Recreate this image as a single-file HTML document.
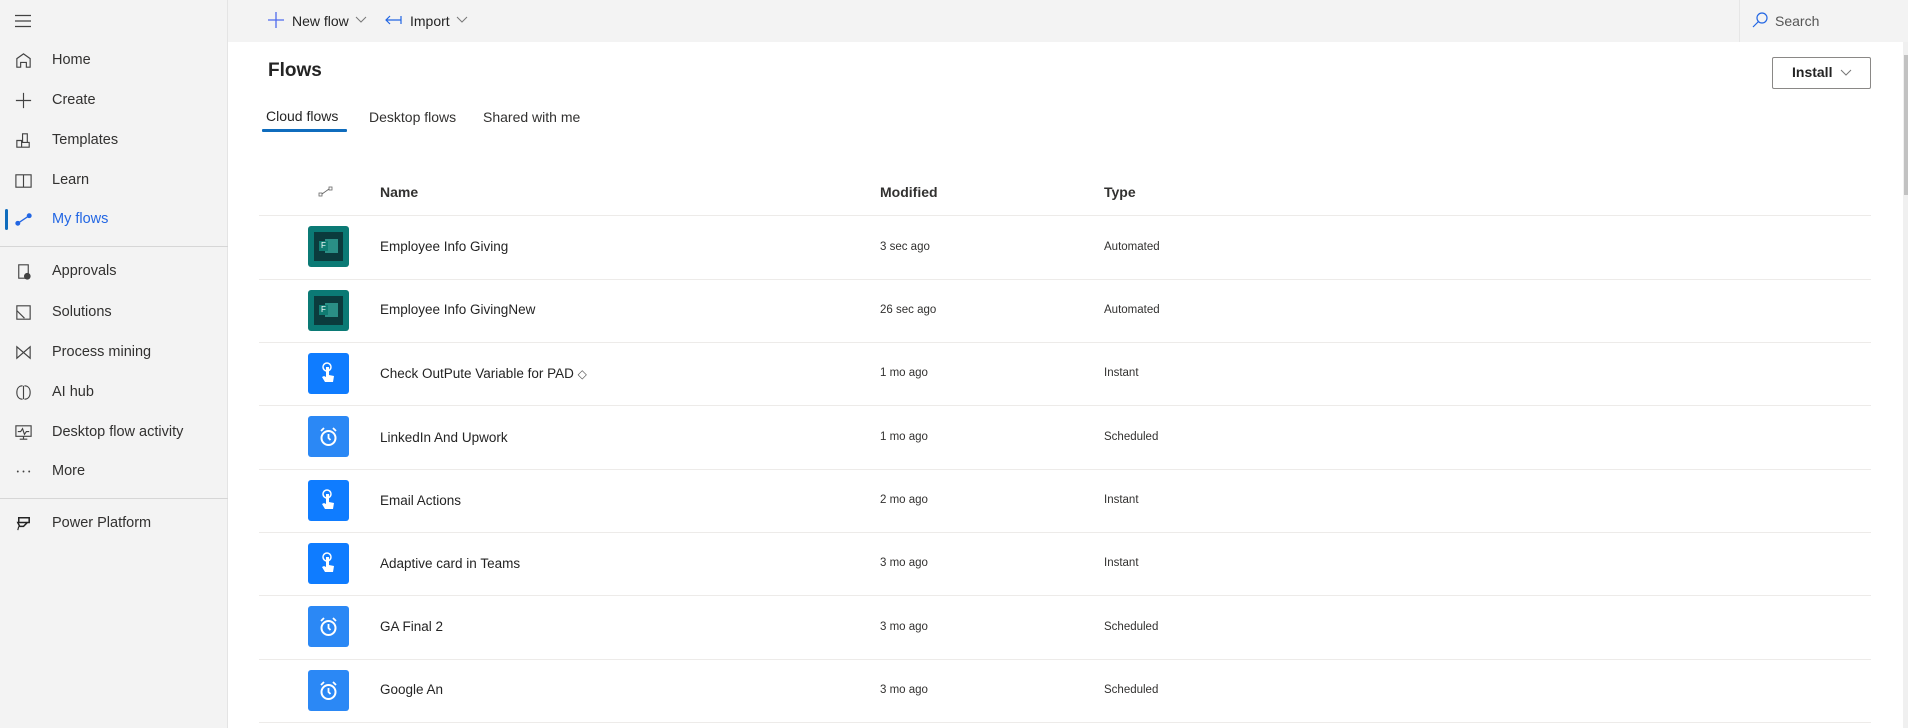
<!DOCTYPE html>
<html><head><meta charset="utf-8"><style>
*{margin:0;padding:0;box-sizing:border-box}
body{width:1908px;height:728px;overflow:hidden;background:#f3f3f3;font-family:"Liberation Sans",sans-serif;color:#242424;position:relative}
.side{position:absolute;left:0;top:0;width:228px;height:728px;background:#f3f3f3;border-right:1px solid #e4e4e4}
.ni{position:absolute;left:0;width:228px;height:36px;display:flex;align-items:center;font-size:14.5px;color:#323130}
.ni svg{position:absolute;left:14px;width:19px;height:19px}
.ni span{position:absolute;left:52px}
.sep{position:absolute;left:0;width:228px;height:1px;background:#d6d6d6}
.top{position:absolute;left:228px;top:0;width:1680px;height:42px;background:#f3f3f3}
.main{position:absolute;left:228px;top:42px;width:1675px;height:686px;background:#fff}
.t{position:absolute;white-space:nowrap}
.row{position:absolute;left:259px;width:1612px;height:1px;background:#edebe9}
.ic{position:absolute;left:308px;width:41px;height:41px;border-radius:3px}
.teal{background:#0b7a75}
.blue{background:#0f7cff}
.nm{position:absolute;left:380px;font-size:13.5px;color:#242424}
.md{position:absolute;left:880px;font-size:11.5px;color:#323130}
.ty{position:absolute;left:1104px;font-size:11.5px;color:#323130}
</style></head><body>
<div class="side">
<svg style="position:absolute;left:14px;top:14px" width="18" height="14"><path d="M1 1.5h16M1 7h16M1 12.5h16" stroke="#424242" stroke-width="1.2"/></svg>
<div class="ni" style="top:42px"><svg viewBox="0 0 20 20"><path d="M3 17V8l7-5 7 5v9h-4v-5H7v5z" fill="none" stroke="#424242" stroke-width="1.2"/></svg><span>Home</span></div>
<div class="ni" style="top:82px"><svg viewBox="0 0 20 20"><path d="M10 2v16M2 10h16" stroke="#424242" stroke-width="1.2"/></svg><span>Create</span></div>
<div class="ni" style="top:122px"><svg viewBox="0 0 20 20"><path d="M3 10h5v7H3zM8 12h8v5H8zM9 3h5v9H9z" fill="none" stroke="#424242" stroke-width="1.2"/></svg><span>Templates</span></div>
<div class="ni" style="top:162px"><svg viewBox="0 0 20 20"><path d="M2 4h16v13H2zM10 4v13" fill="none" stroke="#424242" stroke-width="1.2"/></svg><span>Learn</span></div>
<div style="position:absolute;left:5px;top:209px;width:3px;height:21px;background:#0f6cbd;border-radius:2px"></div>
<div class="ni" style="top:201px"><svg viewBox="0 0 20 20"><circle cx="4" cy="14" r="2.6" fill="#2266e3"/><circle cx="16" cy="6" r="2.6" fill="#2266e3"/><path d="M4 14L16 6" stroke="#2266e3" stroke-width="1.3"/></svg><span style="color:#2266e3">My flows</span></div>
<div class="sep" style="top:246px"></div>
<div class="ni" style="top:253px"><svg viewBox="0 0 20 20"><path d="M5 3h10v14H5z" fill="none" stroke="#424242" stroke-width="1.2"/><circle cx="14" cy="15" r="3.5" fill="#424242"/></svg><span>Approvals</span></div>
<div class="ni" style="top:294px"><svg viewBox="0 0 20 20"><path d="M3 3h14v14H3zM3 8l8 8" fill="none" stroke="#424242" stroke-width="1.2"/></svg><span>Solutions</span></div>
<div class="ni" style="top:334px"><svg viewBox="0 0 20 20"><path d="M3 4v12l14-12v12z" fill="none" stroke="#424242" stroke-width="1.2"/></svg><span>Process mining</span></div>
<div class="ni" style="top:374px"><svg viewBox="0 0 20 20"><path d="M9 3C5 3 3 6 3 10s2 7 6 7M11 3c4 0 6 3 6 7s-2 7-6 7M10 3v14" fill="none" stroke="#424242" stroke-width="1.2"/></svg><span>AI hub</span></div>
<div class="ni" style="top:414px"><svg viewBox="0 0 20 20"><path d="M2 3h16v11H2zM10 14v3M6 17h8M4 9h3l2-3 2 6 2-3h3" fill="none" stroke="#424242" stroke-width="1.2"/></svg><span>Desktop flow activity</span></div>
<div class="ni" style="top:453px"><svg viewBox="0 0 20 20"><circle cx="4" cy="10" r="1" fill="#424242"/><circle cx="10" cy="10" r="1" fill="#424242"/><circle cx="16" cy="10" r="1" fill="#424242"/></svg><span>More</span></div>
<div class="sep" style="top:498px"></div>
<div class="ni" style="top:505px"><svg viewBox="0 0 20 20"><path d="M5 4h11v5H5zM4 9h10l-4 4H6z" fill="none" stroke="#242424" stroke-width="1.6"/><path d="M5 13l-1 4" stroke="#242424" stroke-width="1.2"/></svg><span>Power Platform</span></div>
</div>
<div class="top">
<svg style="position:absolute;left:39px;top:11px" width="18" height="18"><path d="M9 1v16M1 9h16" stroke="#4f6bed" stroke-width="1.3"/></svg>
<div class="t" style="left:64px;top:13px;font-size:14px">New flow</div>
<svg style="position:absolute;left:127px;top:16px" width="12" height="8"><path d="M1 1l5 5 5-5" fill="none" stroke="#777" stroke-width="1"/></svg>
<svg style="position:absolute;left:157px;top:14px" width="18" height="12"><path d="M1 6h15M5 2L1 6l4 4M16 2v8" fill="none" stroke="#2266e3" stroke-width="1.2"/></svg>
<div class="t" style="left:182px;top:13px;font-size:14px">Import</div>
<svg style="position:absolute;left:228px;top:16px" width="12" height="8"><path d="M1 1l5 5 5-5" fill="none" stroke="#777" stroke-width="1"/></svg>
<div style="position:absolute;left:1511px;top:0;width:1px;height:42px;background:#e6e6e6"></div>
<svg style="position:absolute;left:1523px;top:11px" width="18" height="18"><circle cx="11" cy="7" r="5" fill="none" stroke="#2266e3" stroke-width="1.2"/><path d="M7.5 10.5L2 16" stroke="#2266e3" stroke-width="1.2"/></svg>
<div class="t" style="left:1547px;top:13px;font-size:14px;color:#555">Search</div>
</div>
<div class="main"></div>
<div style="position:absolute;left:1903px;top:42px;width:5px;height:686px;background:#f0f0f0"></div>
<div style="position:absolute;left:1904px;top:55px;width:4px;height:140px;background:#c2c2c2"></div>
<div class="t" style="left:268px;top:60px;font-size:19px;font-weight:bold;color:#242424">Flows</div>
<div style="position:absolute;left:1772px;top:57px;width:99px;height:32px;border:1px solid #8a8886;border-radius:2px"></div>
<div class="t" style="left:1792px;top:64px;font-size:14px;font-weight:bold">Install</div>
<svg style="position:absolute;left:1840px;top:69px" width="12" height="8"><path d="M1 1l5 5 5-5" fill="none" stroke="#777" stroke-width="1"/></svg>
<div class="t" style="left:266px;top:108px;font-size:14px;color:#242424">Cloud flows</div>
<div style="position:absolute;left:262px;top:129px;width:85px;height:3px;background:#0f6cbd;border-radius:1px"></div>
<div class="t" style="left:369px;top:109px;font-size:14px;color:#323130">Desktop flows</div>
<div class="t" style="left:483px;top:109px;font-size:14px;color:#323130">Shared with me</div>
<svg style="position:absolute;left:318px;top:186px" width="15" height="12"><rect x="1" y="7" width="3" height="3" fill="none" stroke="#666" stroke-width=".8"/><rect x="11" y="1" width="3" height="3" fill="none" stroke="#666" stroke-width=".8"/><path d="M4 8l7-5" stroke="#666" stroke-width=".8"/></svg>
<div class="t" style="left:380px;top:184px;font-size:14px;font-weight:bold;color:#323130">Name</div>
<div class="t" style="left:880px;top:184px;font-size:14px;font-weight:bold;color:#323130">Modified</div>
<div class="t" style="left:1104px;top:184px;font-size:14px;font-weight:bold;color:#323130">Type</div>
<div class="row" style="top:215px"></div>
<div class="row" style="top:279px"></div>
<div class="row" style="top:342px"></div>
<div class="row" style="top:405px"></div>
<div class="row" style="top:469px"></div>
<div class="row" style="top:532px"></div>
<div class="row" style="top:595px"></div>
<div class="row" style="top:659px"></div>
<div class="row" style="top:722px"></div>

<!-- rows -->
<div class="ic teal" style="top:226px"><div style="position:absolute;left:6px;top:6px;width:29px;height:29px;background:#0b3b3d"></div><div style="position:absolute;left:17px;top:13px;width:13px;height:14px;background:#2a8f86"></div><div style="position:absolute;left:11px;top:15px;width:9px;height:10px;background:#107c72;color:#fff;font-size:8px;text-align:center;line-height:10px">F</div></div>
<div class="nm" style="top:239px">Employee Info Giving</div><div class="md" style="top:241px">3 sec ago</div><div class="ty" style="top:241px">Automated</div>

<div class="ic teal" style="top:290px"><div style="position:absolute;left:6px;top:6px;width:29px;height:29px;background:#0b3b3d"></div><div style="position:absolute;left:17px;top:13px;width:13px;height:14px;background:#2a8f86"></div><div style="position:absolute;left:11px;top:15px;width:9px;height:10px;background:#107c72;color:#fff;font-size:8px;text-align:center;line-height:10px">F</div></div>
<div class="nm" style="top:302px">Employee Info GivingNew</div><div class="md" style="top:304px">26 sec ago</div><div class="ty" style="top:304px">Automated</div>

<div class="ic blue" style="top:353px"><svg width="41" height="41"><circle cx="19" cy="14" r="4" fill="none" stroke="#fff" stroke-width="1.5"/><path d="M18 14v10l-2-1-2 1 3 5h8l1-6-5-1v-8z" fill="#fff"/></svg></div>
<div class="nm" style="top:366px">Check OutPute Variable for PAD <span style="font-size:12px;color:#555">&#9671;</span></div><div class="md" style="top:367px">1 mo ago</div><div class="ty" style="top:367px">Instant</div>

<div class="ic blue" style="top:416px;background:#2b88f5"><svg width="41" height="41"><circle cx="20.5" cy="22" r="7" fill="none" stroke="#fff" stroke-width="2"/><path d="M20.5 18v4l2 2M13 15l3-3M28 15l-3-3" fill="none" stroke="#fff" stroke-width="1.8"/></svg></div>
<div class="nm" style="top:430px">LinkedIn And Upwork</div><div class="md" style="top:431px">1 mo ago</div><div class="ty" style="top:431px">Scheduled</div>

<div class="ic blue" style="top:480px"><svg width="41" height="41"><circle cx="19" cy="14" r="4" fill="none" stroke="#fff" stroke-width="1.5"/><path d="M18 14v10l-2-1-2 1 3 5h8l1-6-5-1v-8z" fill="#fff"/></svg></div>
<div class="nm" style="top:493px">Email Actions</div><div class="md" style="top:494px">2 mo ago</div><div class="ty" style="top:494px">Instant</div>

<div class="ic blue" style="top:543px"><svg width="41" height="41"><circle cx="19" cy="14" r="4" fill="none" stroke="#fff" stroke-width="1.5"/><path d="M18 14v10l-2-1-2 1 3 5h8l1-6-5-1v-8z" fill="#fff"/></svg></div>
<div class="nm" style="top:556px">Adaptive card in Teams</div><div class="md" style="top:557px">3 mo ago</div><div class="ty" style="top:557px">Instant</div>

<div class="ic blue" style="top:606px;background:#2b88f5"><svg width="41" height="41"><circle cx="20.5" cy="22" r="7" fill="none" stroke="#fff" stroke-width="2"/><path d="M20.5 18v4l2 2M13 15l3-3M28 15l-3-3" fill="none" stroke="#fff" stroke-width="1.8"/></svg></div>
<div class="nm" style="top:619px">GA Final 2</div><div class="md" style="top:621px">3 mo ago</div><div class="ty" style="top:621px">Scheduled</div>

<div class="ic blue" style="top:670px;background:#2b88f5"><svg width="41" height="41"><circle cx="20.5" cy="22" r="7" fill="none" stroke="#fff" stroke-width="2"/><path d="M20.5 18v4l2 2M13 15l3-3M28 15l-3-3" fill="none" stroke="#fff" stroke-width="1.8"/></svg></div>
<div class="nm" style="top:682px">Google An</div><div class="md" style="top:684px">3 mo ago</div><div class="ty" style="top:684px">Scheduled</div>
</body></html>
